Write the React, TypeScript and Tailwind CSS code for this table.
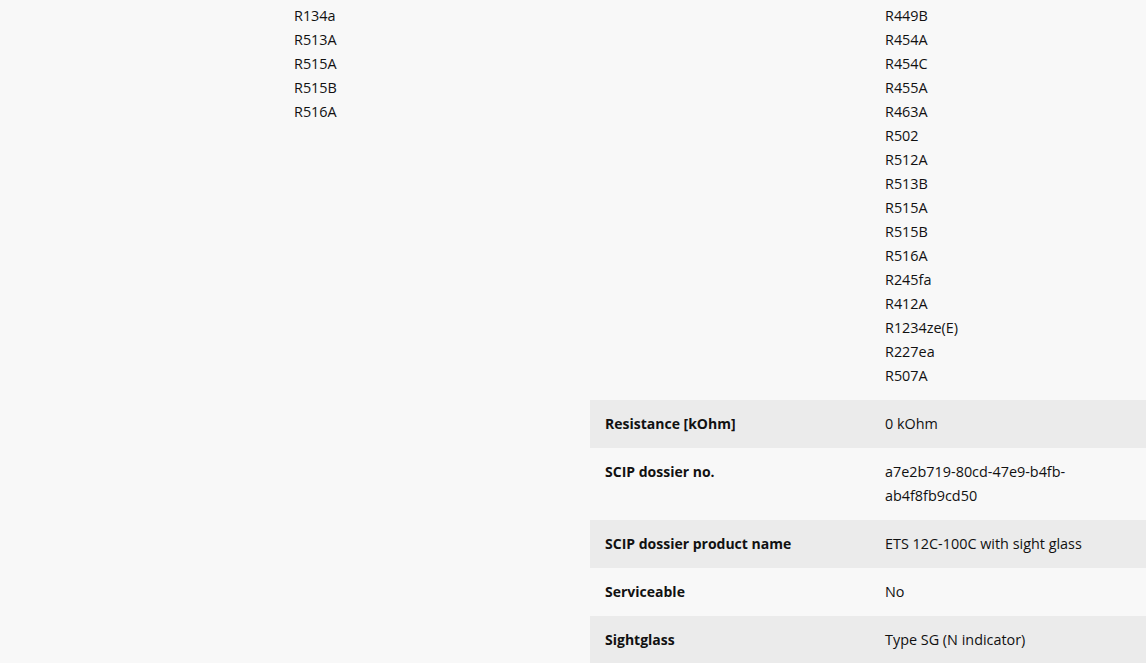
import React from "react";

type Row = { label: string; values: string[]; grey?: boolean };

const leftRows: Row[] = [
  { label: "", values: ["R134a", "R513A", "R515A", "R515B", "R516A"] },
];

const rightRows: Row[] = [
  {
    label: "",
    values: [
      "R449B",
      "R454A",
      "R454C",
      "R455A",
      "R463A",
      "R502",
      "R512A",
      "R513B",
      "R515A",
      "R515B",
      "R516A",
      "R245fa",
      "R412A",
      "R1234ze(E)",
      "R227ea",
      "R507A",
    ],
  },
  { label: "Resistance [kOhm]", values: ["0 kOhm"], grey: true },
  { label: "SCIP dossier no.", values: ["a7e2b719-80cd-47e9-b4fb-ab4f8fb9cd50"] },
  { label: "SCIP dossier product name", values: ["ETS 12C-100C with sight glass"], grey: true },
  { label: "Serviceable", values: ["No"] },
  { label: "Sightglass", values: ["Type SG (N indicator)"], grey: true },
];

function Table({ rows }: { rows: Row[] }) {
  return (
    <div className="flex flex-col">
      {rows.map((r, i) => (
        <div
          key={i}
          className={`flex py-[12px] ${r.grey ? "bg-[#ebebeb]" : ""}`}
        >
          <div className="w-[295px] shrink-0 pl-[15px] pr-[15px] font-bold text-[14px]">{r.label}</div>
          <div className="flex-1 min-w-0 pr-[15px] flex flex-col text-[14.4px]">
            {r.values.map((v, j) => (
              <div key={j}>{v}</div>
            ))}
          </div>
        </div>
      ))}
    </div>
  );
}

export default function App() {
  return (
    <div
      className="w-[1146px] h-[663px] overflow-hidden bg-[#f8f8f8] text-[#111111] leading-[24px]"
      style={{ fontFamily: '"Open Sans", "Noto Sans", sans-serif' }}
    >
      <div className="flex gap-[34px] mt-[-8px]">
        <div className="w-[556px] shrink-0 ml-[-1px]">
          <Table rows={leftRows} />
        </div>
        <div className="w-[556px] shrink-0 ml-[1px]">
          <Table rows={rightRows} />
        </div>
      </div>
    </div>
  );
}
